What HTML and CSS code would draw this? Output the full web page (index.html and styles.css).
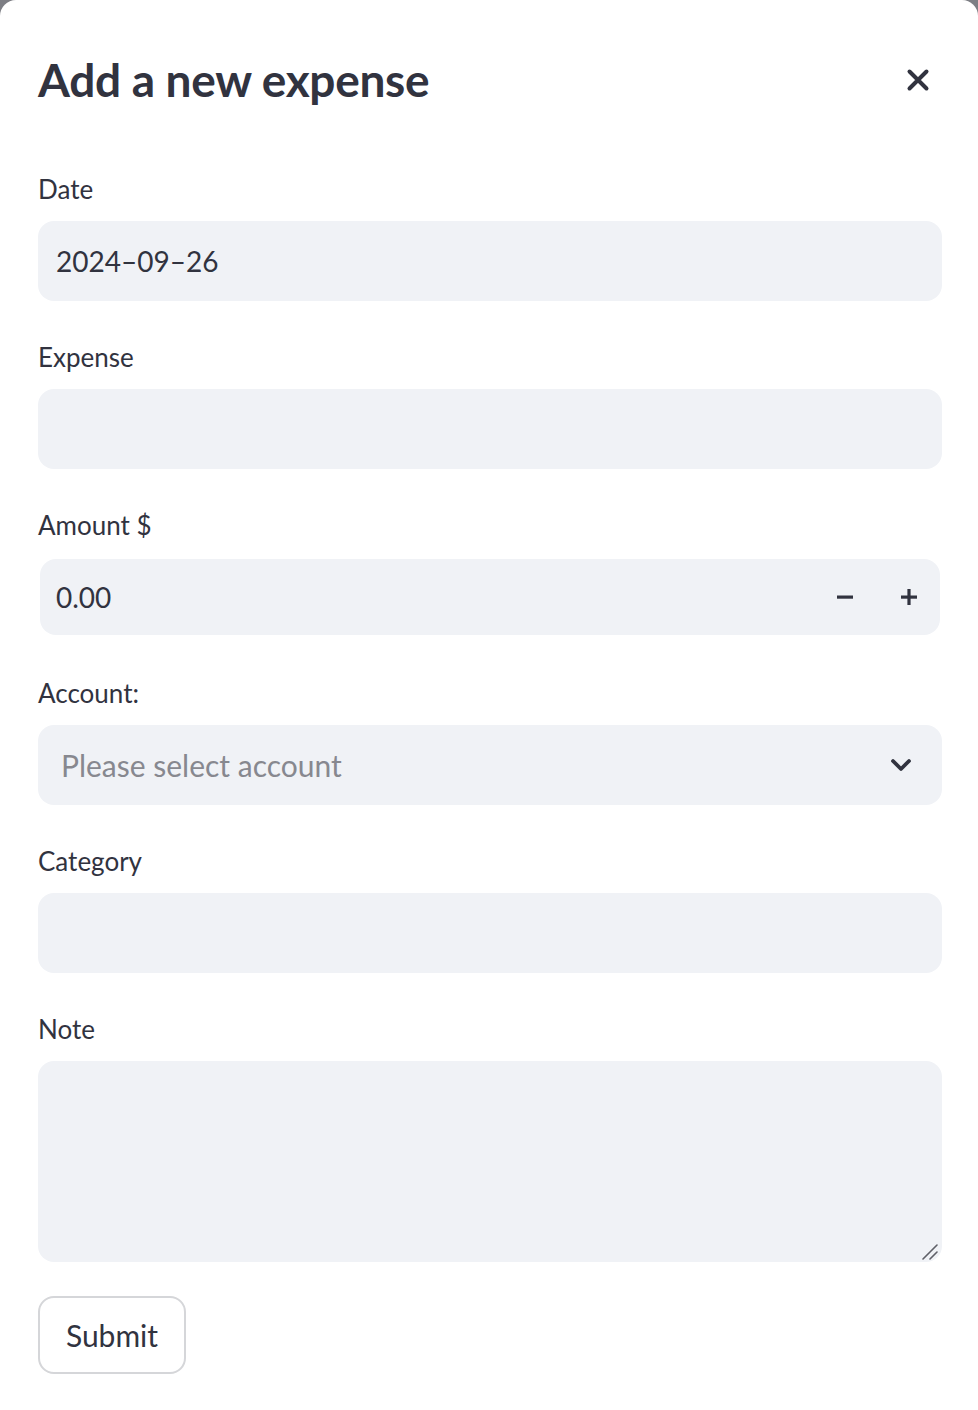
FILE: index.html
```html
<!DOCTYPE html>
<html lang="en">
<head>
<meta charset="utf-8">
<title>Add a new expense</title>
<link rel="stylesheet" href="styles.css">
</head>
<body>
<div class="dialog">
  <header class="dialog-header">
    <h2 class="dialog-title">Add a new expense</h2>
    <button class="close-btn" aria-label="Close">
      <svg width="24" height="24" viewBox="0 0 24 24"><path d="M3.5 3.5 L20.5 20.5 M20.5 3.5 L3.5 20.5" stroke="#31333f" stroke-width="4" stroke-linecap="round"/></svg>
    </button>
  </header>
  <form class="form">
    <div class="field">
      <label class="label">Date</label>
      <div class="input-box"><span class="value">2024–09–26</span></div>
    </div>
    <div class="field">
      <label class="label">Expense</label>
      <div class="input-box"></div>
    </div>
    <div class="field">
      <label class="label">Amount $</label>
      <div class="input-box number-box">
        <span class="value">0.00</span>
        <div class="steppers">
          <span class="step">
            <svg width="18" height="18" viewBox="0 0 18 18"><rect x="1" y="7.5" width="16" height="3.2" fill="#31333f"/></svg>
          </span>
          <span class="step">
            <svg width="18" height="18" viewBox="0 0 18 18"><rect x="1" y="7.5" width="16" height="3.2" fill="#31333f"/><rect x="7.4" y="1" width="3.2" height="16" fill="#31333f"/></svg>
          </span>
        </div>
      </div>
    </div>
    <div class="field">
      <label class="label">Account:</label>
      <div class="input-box select-box">
        <span class="placeholder">Please select account</span>
        <svg class="chevron" width="22" height="14" viewBox="0 0 22 14"><path d="M3 3 L11 11 L19 3" fill="none" stroke="#31333f" stroke-width="3.8" stroke-linecap="round" stroke-linejoin="round"/></svg>
      </div>
    </div>
    <div class="field">
      <label class="label">Category</label>
      <div class="input-box"></div>
    </div>
    <div class="field">
      <label class="label">Note</label>
      <div class="textarea-wrap">
        <textarea class="textarea"></textarea>
        <svg class="grip" width="18" height="18" viewBox="0 0 18 18"><path d="M2 17 L16 3 M9 17 L16 10" stroke="#5f6068" stroke-width="1.6" stroke-linecap="round"/></svg>
      </div>
    </div>
    <div class="actions">
      <button type="button" class="submit-btn">Submit</button>
    </div>
  </form>
</div>
</body>
</html>
```
FILE: styles.css
```css
html, body {
  margin: 0;
  padding: 0;
}
body {
  background: #7d7e84;
  font-family: "Lato", "Noto Sans", sans-serif;
  color: #31333f;
}
.dialog {
  background: #ffffff;
  border-radius: 16px 16px 0 0;
  min-height: 1410px;
  box-sizing: border-box;
  padding: 50px 36px 0 38px;
}
.dialog-header {
  display: flex;
  align-items: center;
  justify-content: space-between;
  height: 60px;
}
.dialog-title {
  margin: 0;
  font-size: 46px;
  font-weight: 700;
  line-height: 60px;
  letter-spacing: -0.3px;
  color: #31333f;
}
.close-btn {
  border: none;
  background: transparent;
  padding: 0;
  margin-right: 12px;
  width: 24px;
  height: 24px;
  display: flex;
}
.form {
  display: flex;
  flex-direction: column;
  gap: 36px;
  margin-top: 59px;
}
.field {
  display: flex;
  flex-direction: column;
  gap: 12px;
}
.label {
  font-size: 26px;
  line-height: 40px;
  height: 40px;
  color: #31333f;
}
.input-box {
  background: #f0f2f6;
  border-radius: 16px;
  height: 80px;
  display: flex;
  align-items: center;
  padding: 0 18px;
  box-sizing: border-box;
}
.value {
  font-size: 28px;
  color: #31333f;
}
.number-box {
  margin: 2px 2px;
  height: 76px;
  padding-left: 16px;
  padding-right: 22px;
  justify-content: space-between;
}
.steppers {
  display: flex;
  gap: 46px;
  align-items: center;
}
.step {
  display: flex;
  width: 18px;
  height: 18px;
}
.select-box {
  justify-content: space-between;
  padding-left: 23px;
  padding-right: 30px;
}
.placeholder {
  font-size: 30px;
  color: #87888f;
}
.chevron {
  display: block;
}
.textarea-wrap {
  position: relative;
}
.textarea {
  display: block;
  background: #f0f2f6;
  border: none;
  border-radius: 16px;
  height: 201px;
  width: 100%;
  box-sizing: border-box;
  resize: none;
  outline: none;
  font-family: inherit;
  font-size: 28px;
  padding: 16px 18px;
}
.grip {
  position: absolute;
  right: 3px;
  bottom: 2px;
}
.actions {
  margin-top: -2px;
}
.submit-btn {
  width: 148px;
  height: 78px;
  background: #ffffff;
  border: 2px solid #d5d6d9;
  border-radius: 16px;
  font-family: inherit;
  font-size: 30px;
  color: #31333f;
  padding: 0;
}
```
